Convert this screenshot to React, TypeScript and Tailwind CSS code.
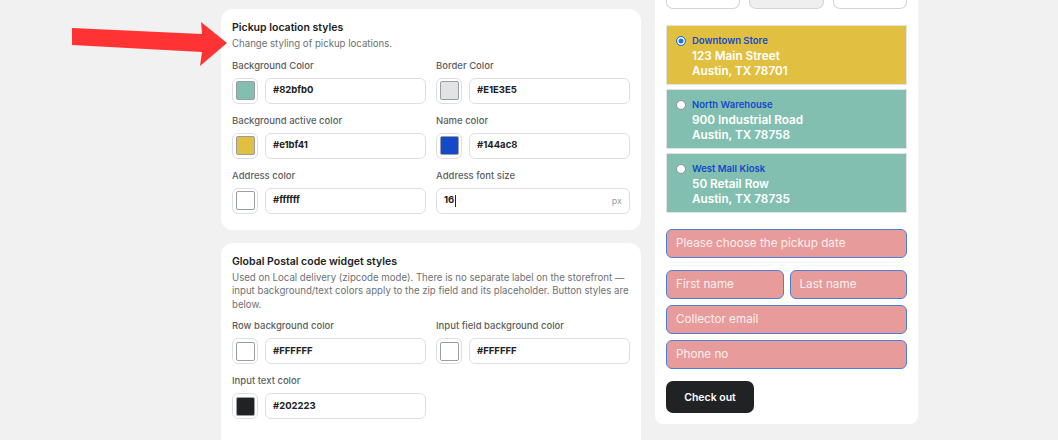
const font = { fontFamily: "Inter, 'Noto Sans', sans-serif" };

type Field = { label: string; swatch?: string; value: string; suffix?: string };

const ColorField = ({ label, swatch, value, suffix }: Field) => (
  <div className="flex flex-col gap-[6px]">
    <p className="text-[9.5px] font-medium leading-[12px] text-[#5c5f62]">{label}</p>
    <div className="flex gap-[7px]">
      {swatch && (
        <div className="w-[26px] h-[26px] shrink-0 rounded-[6px] border border-[#dcdfe2] flex items-center justify-center">
          <div className="w-[19px] h-[19px] rounded-[2px] border border-[#9a9ea3]" style={{ backgroundColor: swatch }} />
        </div>
      )}
      <div className="flex-1 h-[26px] rounded-[6px] border border-[#dcdfe2] flex items-center justify-between px-[7px]">
        <span className="text-[9.5px] font-bold text-[#202223] flex items-center">
          {value}
          {suffix && <span className="w-px h-[12px] bg-[#202223] ml-px" />}
        </span>
        {suffix && <span className="text-[9px] text-[#9a9ea3]">{suffix}</span>}
      </div>
    </div>
  </div>
);

const Card = ({ title, desc, children, className = "" }: { title: string; desc: React.ReactNode; children: React.ReactNode; className?: string }) => (
  <div className={`bg-white rounded-[12px] px-[11px] pt-[12px] w-[420px] ${className}`}>
    <h2 className="text-[10.5px] font-semibold leading-[14px] text-[#202223]">{title}</h2>
    <p className="text-[9.65px] leading-[13.5px] text-[#6d7175] mt-[2px] whitespace-nowrap">{desc}</p>
    <div className="grid grid-cols-2 gap-x-[10px] gap-y-[11px] mt-[9px]">{children}</div>
  </div>
);

const locations = [
  { name: "Downtown Store", l1: "123 Main Street", l2: "Austin, TX 78701", active: true },
  { name: "North Warehouse", l1: "900 Industrial Road", l2: "Austin, TX 78758", active: false },
  { name: "West Mall Kiosk", l1: "50 Retail Row", l2: "Austin, TX 78735", active: false },
];

const pink =
  "h-[29px] rounded-[6px] border border-[#4a80dc] bg-[#e79b9b] flex items-center px-[9px] pt-[1px] text-[11.7px] text-[#fbeeee]";

export default function App() {
  return (
    <div className="relative w-[1058px] h-[440px] overflow-hidden bg-[#f1f1f1]" style={font}>
      <div className="flex items-start gap-[14px] pl-[221px]">
        <div className="flex flex-col gap-[13px] pt-[9px]">
          <Card title="Pickup location styles" desc="Change styling of pickup locations." className="pb-[16px]">
            <ColorField label="Background Color" swatch="#82bfb0" value="#82bfb0" />
            <ColorField label="Border Color" swatch="#E1E3E5" value="#E1E3E5" />
            <ColorField label="Background active color" swatch="#e1bf41" value="#e1bf41" />
            <ColorField label="Name color" swatch="#144ac8" value="#144ac8" />
            <ColorField label="Address color" swatch="#ffffff" value="#ffffff" />
            <ColorField label="Address font size" value="16" suffix="px" />
          </Card>
          <Card
            title="Global Postal code widget styles"
            className="pb-[40px]"
            desc={
              <>
                Used on Local delivery (zipcode mode). There is no separate label on the storefront —
                <br />
                input background/text colors apply to the zip field and its placeholder. Button styles are
                <br />
                below.
              </>
            }
          >
            <ColorField label="Row background color" swatch="#FFFFFF" value="#FFFFFF" />
            <ColorField label="Input field background color" swatch="#FFFFFF" value="#FFFFFF" />
            <ColorField label="Input text color" swatch="#202223" value="#202223" />
          </Card>
        </div>

        <div className="w-[263px] bg-white rounded-b-[8px] px-[11px] pb-[11px] -mt-[20px]">
          <div className="flex gap-[9px]">
            <div className="flex-1 h-[29px] rounded-b-[7px] border border-t-0 border-[#d2d5d8] bg-white" />
            <div className="flex-1 h-[29px] rounded-b-[7px] border border-t-0 border-[#d2d5d8] bg-[#efefef]" />
            <div className="flex-1 h-[29px] rounded-b-[7px] border border-t-0 border-[#d2d5d8] bg-white" />
          </div>

          <div className="flex flex-col gap-[4px] mt-[16px]">
            {locations.map((loc) => (
              <div
                key={loc.name}
                className={`h-[60px] border border-[#e1e3e5] flex gap-[6px] px-[9px] pt-[9px] ${loc.active ? "bg-[#e1bf41]" : "bg-[#82bfb0]"}`}
              >
                <span
                  className={`mt-[1px] w-[10px] h-[10px] rounded-full shrink-0 ${loc.active ? "border-[1.5px] border-[#1a73e8] bg-[#1a73e8] shadow-[inset_0_0_0_1.5px_#fff]" : "border border-[#8c9196] bg-white"}`}
                />
                <div>
                  <p className="text-[9.5px] font-semibold leading-[12px] text-[#144ac8]">{loc.name}</p>
                  <p className="text-[11.75px] font-semibold leading-[15px] text-white mt-[2px]">{loc.l1}</p>
                  <p className="text-[11.75px] font-semibold leading-[15px] text-white">{loc.l2}</p>
                </div>
              </div>
            ))}
          </div>

          <div className="mt-[16px] flex flex-col gap-[6px]">
            <div className={pink}>Please choose the pickup date</div>
            <div className="flex gap-[6px] mt-[6px]">
              <div className={`flex-1 ${pink}`}>First name</div>
              <div className={`flex-1 ${pink}`}>Last name</div>
            </div>
            <div className={pink}>Collector email</div>
            <div className={pink}>Phone no</div>
          </div>

          <button className="mt-[12px] w-[88px] h-[32px] rounded-[7px] bg-[#202223] text-white text-[10.5px] font-semibold pt-[2px]">
            Check out
          </button>
        </div>
      </div>

      <svg className="absolute left-0 top-0" width="240" height="80" viewBox="0 0 240 80">
        <polygon points="72,28 202,34 201,22 227,43 200,66 202,52 72,45" fill="#ff3333" />
      </svg>
    </div>
  );
}
